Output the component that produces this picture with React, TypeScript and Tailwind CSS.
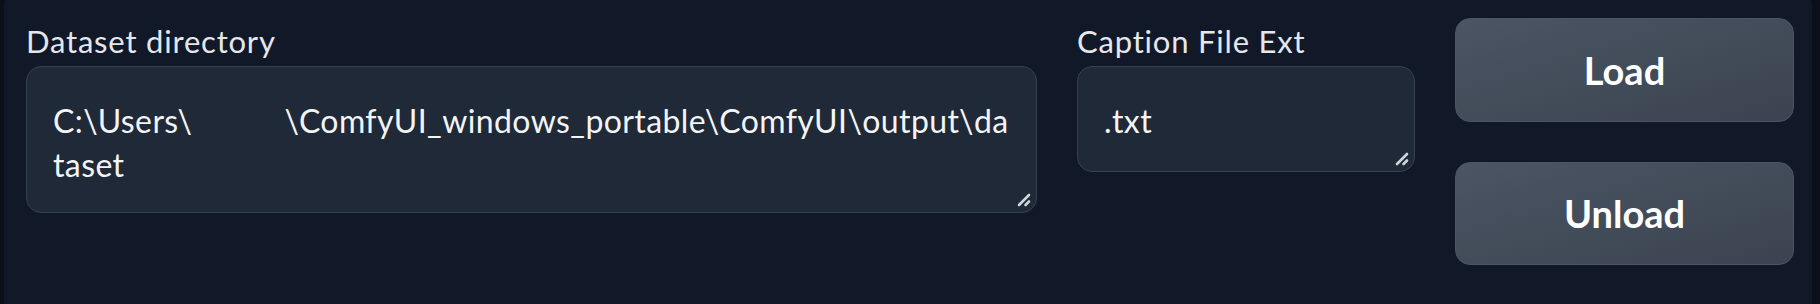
import React from 'react';

function ResizeHandle() {
  return (
    <svg className="absolute bottom-[5px] right-[4px] h-[16px] w-[16px]" viewBox="0 0 16 16" fill="none">
      <path d="M3 14 L13 4" stroke="#d1d5db" strokeWidth="2.6" strokeLinecap="round" />
      <path d="M9.5 14 L13 10.5" stroke="#d1d5db" strokeWidth="2.6" strokeLinecap="round" />
    </svg>
  );
}

function Field({ label, height, children }: { label: string; height: string; children: React.ReactNode }) {
  return (
    <div className="flex flex-col">
      <span className="mb-[2px] text-[31px] leading-[46px] tracking-[0.8px] text-[#e5e7eb]">{label}</span>
      <div
        className={`relative ${height} rounded-[15px] border border-[#374151] bg-[#1f2937] pl-[26px] pt-[32px] text-[32px] leading-[44px] tracking-[0.4px] text-[#f3f4f6]`}
      >
        {children}
        <ResizeHandle />
      </div>
    </div>
  );
}

export default function App() {
  return (
    <div className="h-[304px] overflow-hidden bg-[#0b0f19] pl-[4px] pr-[8px] font-['Lato','Liberation_Sans',sans-serif]">
      <div className="-mt-[8px] flex h-[330px] gap-[40px] rounded-[14px] bg-[#111827] pl-[22px] pr-[18px] pt-[26px]">
        {/* Dataset directory */}
        <div className="flex-1">
          <Field label="Dataset directory" height="h-[147px]">
            <div className="whitespace-nowrap">
              {'C:\\Users\\'}
              <span className="inline-block w-[92px]" />
              {'\\ComfyUI_windows_portable\\ComfyUI\\output\\da'}
            </div>
            <div className="whitespace-nowrap">taset</div>
          </Field>
        </div>

        {/* Caption ext */}
        <div className="w-[338px]">
          <Field label="Caption File Ext" height="h-[106px]">
            <div>.txt</div>
          </Field>
        </div>

        {/* Buttons */}
        <div className="flex w-[339px] flex-col gap-[40px]">
          <button className="h-[104px] rounded-[15px] border border-[#4b5563] bg-gradient-to-br from-[#4b5563] to-[#3b4350] text-[38px] font-bold text-white">
            Load
          </button>
          <button className="h-[103px] rounded-[15px] border border-[#4b5563] bg-gradient-to-br from-[#4b5563] to-[#3b4350] text-[38px] font-bold text-white">
            Unload
          </button>
        </div>
      </div>
    </div>
  );
}
